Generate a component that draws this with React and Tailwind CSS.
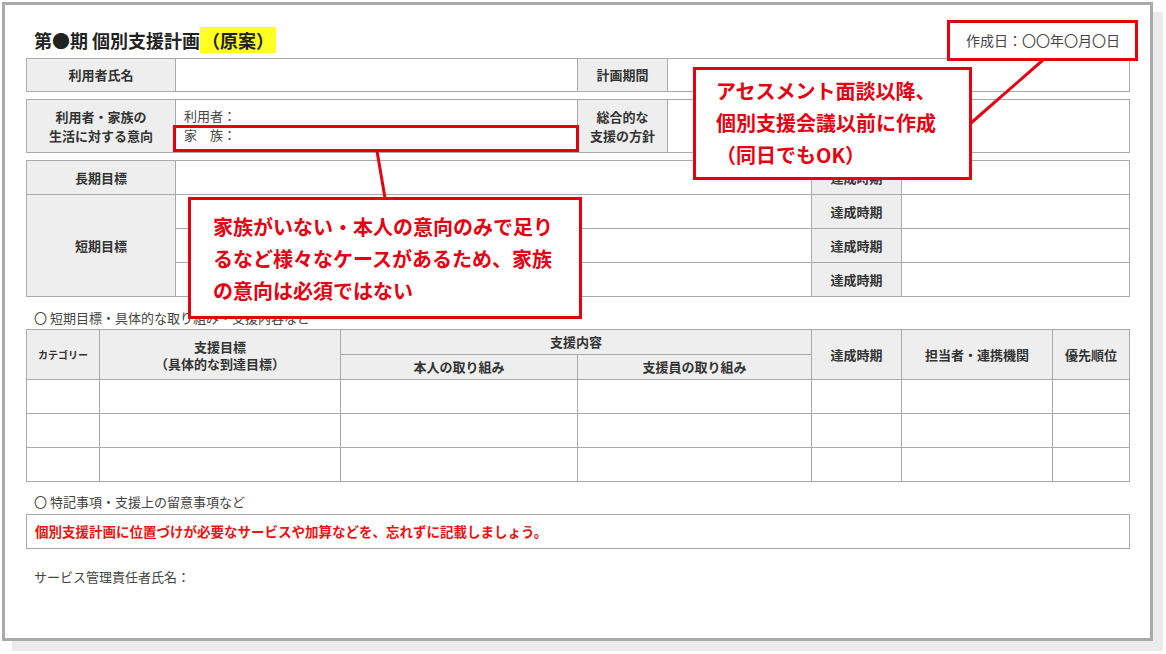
export default function App() {
  const f = { fontFamily: '"Noto Sans CJK JP", "Noto Sans", sans-serif' };
  const thb = "bg-[#eeeeee] border border-[#aaaaaa] font-bold text-[#333] text-center";
  const th = thb + " text-[13px]";
  const td = "border border-[#aaaaaa] bg-white";
  return (
    <div className="w-[1166px] h-[654px] bg-white relative" style={f}>
      <div className="absolute left-[2px] top-[2px] w-[1151px] h-[639px] border-[3px] border-[#aaaaaa] bg-white shadow-[10px_10px_0_#ebebeb]">
        <div className="pl-[21px] pr-[20px] pt-[19px] text-[#333]">
          <div className="flex items-end justify-between h-[33px]">
            <div className="text-[18px] font-bold text-[#222] ml-[8px] leading-[25px] mb-[4px]">
              第●期 個別支援計画<span className="bg-[#ffff22] px-[2px]">（原案）</span>
            </div>
          </div>
          <table className="w-full table-fixed border-collapse mt-[1px]">
            <colgroup><col className="w-[149px]" /><col className="w-[402px]" /><col className="w-[90px]" /><col /></colgroup>
            <tbody>
              <tr className="h-[33px]"><td className={th}>利用者氏名</td><td className={td}></td><td className={th}>計画期間</td><td className={td}></td></tr>
            </tbody>
          </table>
          <table className="w-full table-fixed border-collapse mt-[7px]">
            <colgroup><col className="w-[149px]" /><col className="w-[402px]" /><col className="w-[90px]" /><col /></colgroup>
            <tbody>
              <tr className="h-[53px]">
                <td className={th + " leading-[19px]"}>利用者・家族の<br />生活に対する意向</td>
                <td className={td + " text-[13px] leading-[19px] pl-[8px] pt-[6px] align-top text-[#444]"}>利用者：<br />家　族：</td>
                <td className={th + " leading-[19px]"}>総合的な<br />支援の方針</td>
                <td className={td}></td>
              </tr>
            </tbody>
          </table>
          <table className="w-full table-fixed border-collapse mt-[7px]">
            <colgroup><col className="w-[149px]" /><col className="w-[636px]" /><col className="w-[90px]" /><col /></colgroup>
            <tbody>
              <tr className="h-[34px]"><td className={th}>長期目標</td><td className={td}></td><td className={th}>達成時期</td><td className={td}></td></tr>
              <tr className="h-[34px]"><td className={th} rowSpan={3}>短期目標</td><td className={td}></td><td className={th}>達成時期</td><td className={td}></td></tr>
              <tr className="h-[34px]"><td className={td}></td><td className={th}>達成時期</td><td className={td}></td></tr>
              <tr className="h-[34px]"><td className={td}></td><td className={th}>達成時期</td><td className={td}></td></tr>
            </tbody>
          </table>
          <div className="text-[13px] text-[#444] ml-[8px] mt-[12px] leading-[18px]">〇 短期目標・具体的な取り組み・支援内容など</div>
          <table className="w-full table-fixed border-collapse mt-[2px]">
            <colgroup><col className="w-[73px]" /><col className="w-[241px]" /><col className="w-[237px]" /><col className="w-[234px]" /><col className="w-[90px]" /><col className="w-[151px]" /><col /></colgroup>
            <tbody>
              <tr className="h-[25px]">
                <td className={thb + " text-[10px]"} rowSpan={2}>カテゴリー</td>
                <td className={th + " leading-[17px]"} rowSpan={2}>支援目標<br />（具体的な到達目標）</td>
                <td className={th} colSpan={2}>支援内容</td>
                <td className={th} rowSpan={2}>達成時期</td>
                <td className={th} rowSpan={2}>担当者・連携機関</td>
                <td className={th} rowSpan={2}>優先順位</td>
              </tr>
              <tr className="h-[25px]"><td className={th}>本人の取り組み</td><td className={th}>支援員の取り組み</td></tr>
              {[0, 1, 2].map((i) => (
                <tr key={i} className="h-[34px]">{[0, 1, 2, 3, 4, 5, 6].map((j) => <td key={j} className={td}></td>)}</tr>
              ))}
            </tbody>
          </table>
          <div className="text-[13px] text-[#444] ml-[8px] mt-[11px] leading-[18px]">〇 特記事項・支援上の留意事項など</div>
          <div className="border border-[#aaaaaa] h-[35px] mt-[3px] flex items-center pl-[8px] text-[13.5px] font-bold text-[#ee1111]">
            個別支援計画に位置づけが必要なサービスや加算などを、忘れずに記載しましょう。
          </div>
          <div className="text-[13px] text-[#444] ml-[8px] mt-[18px]">サービス管理責任者氏名：</div>
        </div>
      </div>

      <svg className="absolute left-0 top-0" width="1166" height="654">
        <line x1="377" y1="151" x2="385" y2="198" stroke="#e50012" strokeWidth="3" />
        <line x1="1043" y1="60" x2="971" y2="123" stroke="#e50012" strokeWidth="3" />
      </svg>

      <div className="absolute left-[947px] top-[20px] w-[191px] h-[41px] border-[3px] border-[#e50012] bg-white flex items-center pl-[16px] text-[14px] text-[#444]">
        作成日：〇〇年〇月〇日
      </div>
      <div className="absolute left-[173px] top-[125px] w-[406px] h-[27px] border-[3px] border-[#e50012]"></div>
      <div className="absolute left-[188px] top-[197px] w-[394px] h-[122px] border-[3px] border-[#e50012] bg-white pl-[22px] pt-[11px] text-[20px] font-bold text-[#e50012] leading-[32px] whitespace-nowrap">
        家族がいない・本人の意向のみで足り<br />るなど様々なケースがあるため、家族<br />の意向は必須ではない
      </div>
      <div className="absolute left-[693px] top-[67px] w-[279px] h-[113px] border-[3px] border-[#e50012] bg-white pl-[20px] pt-[5px] text-[20px] font-bold text-[#e50012] leading-[32px] whitespace-nowrap">
        アセスメント面談以降、<br />個別支援会議以前に作成<br />（同日でもOK）
      </div>
    </div>
  );
}
